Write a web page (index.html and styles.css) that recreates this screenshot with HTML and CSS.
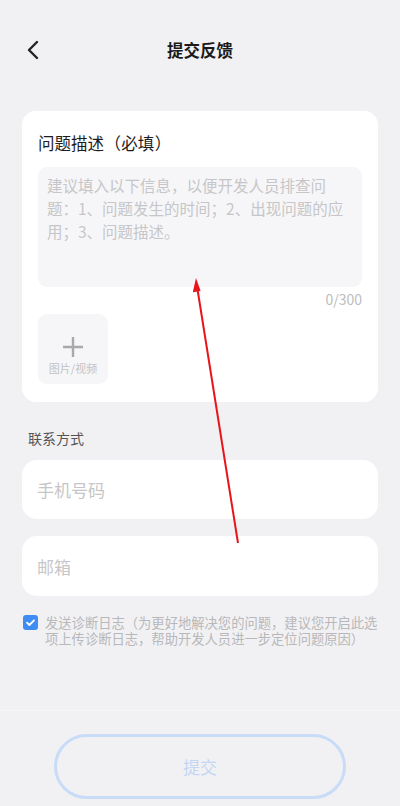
FILE: index.html
```html
<!DOCTYPE html>
<html lang="zh-CN">
<head>
<meta charset="utf-8">
<title>提交反馈</title>
<link rel="stylesheet" href="styles.css">
</head>
<body>
<div class="page">
  <header class="nav">
    <svg class="back" width="16" height="20" viewBox="0 0 16 20"><path d="M11 2 L3 10 L11 18" fill="none" stroke="#222" stroke-width="2.4" stroke-linecap="round" stroke-linejoin="round"/></svg>
    <div class="title">提交反馈</div>
  </header>
  <main class="main">
    <section class="card">
      <div class="card-title">问题描述<span class="paren">（</span>必填<span class="paren">）</span></div>
      <div class="textarea">建议填入以下信息，以便开发人员排查问题：1、问题发生的时间；2、出现问题的应用；3、问题描述。</div>
      <div class="counter">0/300</div>
      <div class="upload">
        <svg width="22" height="22" viewBox="0 0 22 22"><path d="M11 1 V21 M1 11 H21" stroke="#a9a9ab" stroke-width="2.4"/></svg>
        <span class="upload-text">图片/视频</span>
      </div>
    </section>
    <div class="section-label">联系方式</div>
    <div class="input">手机号码</div>
    <div class="input input-second">邮箱</div>
    <div class="check-row">
      <span class="checkbox"><svg width="15" height="15" viewBox="0 0 15 15"><path d="M4 7.6 L6.4 10 L11 5.3" fill="none" stroke="#fff" stroke-width="1.8" stroke-linecap="round" stroke-linejoin="round"/></svg></span>
      <p class="check-text">发送诊断日志（为更好地解决您的问题，建议您开启此选项上传诊断日志，帮助开发人员进一步定位问题原因）</p>
    </div>
  </main>
  <footer class="footer">
    <div class="submit">提交</div>
  </footer>
  <svg class="annotation" width="400" height="806" viewBox="0 0 400 806">
    <line x1="238" y1="543" x2="197.6" y2="290" stroke="#e8141b" stroke-width="2"/>
    <polygon points="196,278 200.6,291 192.8,292.2" fill="#e8141b"/>
  </svg>
</div>
</body>
</html>
```
FILE: styles.css
```css
* { box-sizing: border-box; }
html, body { margin: 0; padding: 0; }
body {
  background: #f1f1f4;
  font-family: "Noto Sans CJK SC", "Noto Sans", sans-serif;
  color: #222;
  text-spacing-trim: space-all;
}
.page {
  position: relative;
  width: 400px;
  height: 806px;
  overflow: hidden;
  display: flex;
  flex-direction: column;
}
.nav {
  position: relative;
  margin-top: 30px;
  height: 40px;
  display: flex;
  align-items: center;
  justify-content: center;
}
.back {
  position: absolute;
  left: 26px;
  top: 10px;
}
.title {
  font-size: 16.5px;
  font-weight: 700;
  color: #1a1a1a;
}
.main {
  padding: 0 22px;
  margin-top: 41px;
}
.card {
  background: #fff;
  border-radius: 14px;
  padding: 21px 16px 18px;
}
.card-title {
  font-size: 16.5px;
  line-height: 22px;
  color: #1d1d1d;
  margin-bottom: 13px;
}
.paren {
  display: inline-block;
  width: 1.05em;
  text-align: center;
}
.textarea {
  height: 120px;
  background: #f6f6f8;
  border-radius: 9px;
  padding: 7px 12px 0 9px;
  font-size: 15.5px;
  line-height: 23px;
  color: #c6c6c8;
}
.counter {
  margin-top: 4px;
  text-align: right;
  font-size: 14px;
  line-height: 16px;
  color: #bcbcbe;
}
.upload {
  margin-top: 7px;
  width: 70px;
  height: 70px;
  background: #f6f6f8;
  border-radius: 9px;
  display: flex;
  flex-direction: column;
  align-items: center;
  padding-top: 22px;
}
.upload-text {
  margin-top: 4px;
  font-size: 11px;
  line-height: 13px;
  color: #c2c2c4;
}
.section-label {
  margin-top: 26px;
  padding-left: 6px;
  font-size: 14px;
  line-height: 20px;
  color: #555;
}
.input {
  margin-top: 12px;
  height: 59px;
  background: #fff;
  border-radius: 15px;
  padding-left: 15px;
  display: flex;
  align-items: center;
  font-size: 17px;
  color: #c6c6c8;
}
.input-second {
  margin-top: 17px;
  height: 60px;
}
.check-row {
  margin-top: 19px;
  display: flex;
  align-items: flex-start;
  gap: 7px;
  padding-left: 1px;
}
.checkbox {
  flex: none;
  width: 15px;
  height: 15px;
  border-radius: 3px;
  background: #3f8cf5;
  display: flex;
}
.check-text {
  margin: 0;
  font-size: 13.3px;
  line-height: 16px;
  color: #b8b8ba;
}
.footer {
  margin-top: auto;
  height: 96px;
  border-top: 1px solid #f6f6f8;
  padding-top: 23px;
  display: flex;
  justify-content: center;
}
.submit {
  width: 292px;
  height: 65px;
  border: 3px solid #c8dcf8;
  border-radius: 33px;
  display: flex;
  align-items: center;
  justify-content: center;
  font-size: 17px;
  color: #c3d6f3;
}
.annotation {
  position: absolute;
  left: 0;
  top: 0;
  pointer-events: none;
}
```
